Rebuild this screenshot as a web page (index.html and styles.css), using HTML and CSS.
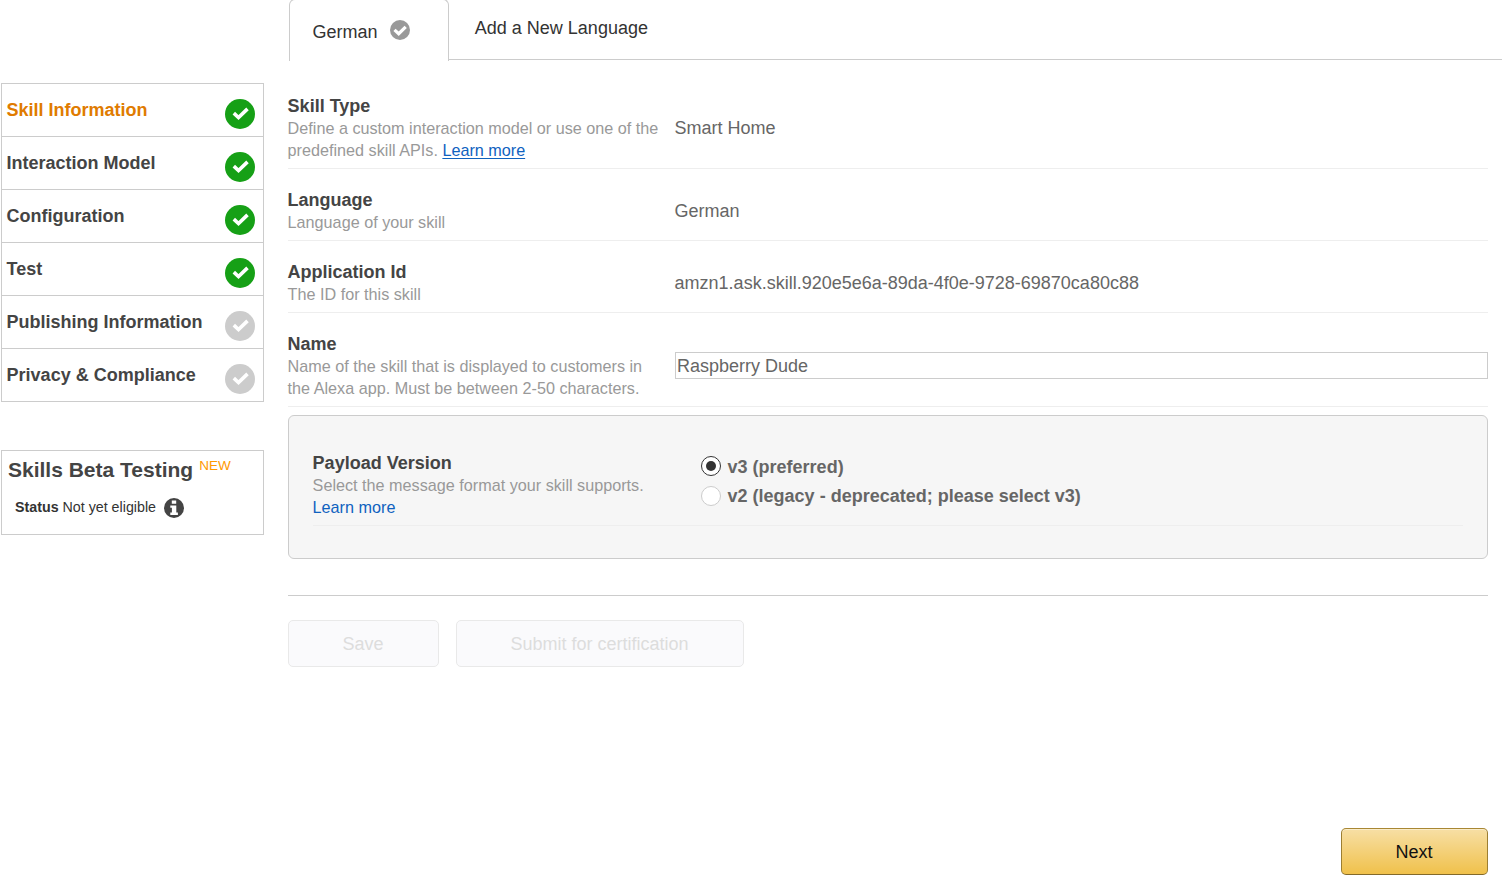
FILE: index.html
```html
<!DOCTYPE html>
<html lang="en">
<head>
<meta charset="utf-8">
<title>Skill Information</title>
<link rel="stylesheet" href="styles.css">
</head>
<body>
<svg class="defs" width="0" height="0" aria-hidden="true">
  <symbol id="check" viewBox="0 0 30 30">
    <circle cx="15" cy="15" r="15" fill="currentColor"/>
    <path d="M8.8 14.2l4.7 4.3 9-8.6" fill="none" stroke="#fff" stroke-width="3.6"/>
  </symbol>
</svg>
<header class="tabs">
  <div class="tab tab-active"><span>German</span>
    <svg class="tab-icon" viewBox="0 0 20 20"><circle cx="10" cy="10" r="10" fill="#999"/><path d="M4.5 9.8l4.2 3.9 7-6.9" fill="none" stroke="#fff" stroke-width="3.2"/></svg>
  </div>
  <div class="tab tab-new">Add a New Language</div>
</header>
<div class="layout">
  <aside class="sidebar">
    <nav class="steps">
      <a class="step current"><span>Skill Information</span><svg class="done"><use href="#check"/></svg></a>
      <a class="step"><span>Interaction Model</span><svg class="done"><use href="#check"/></svg></a>
      <a class="step"><span>Configuration</span><svg class="done"><use href="#check"/></svg></a>
      <a class="step"><span>Test</span><svg class="done"><use href="#check"/></svg></a>
      <a class="step"><span>Publishing Information</span><svg class="todo"><use href="#check"/></svg></a>
      <a class="step"><span>Privacy &amp; Compliance</span><svg class="todo"><use href="#check"/></svg></a>
    </nav>
    <section class="beta">
      <div class="beta-head"><h2>Skills Beta Testing</h2><span class="new">NEW</span></div>
      <div class="status"><span><b>Status</b> Not yet eligible</span>
        <svg class="info" viewBox="0 0 20 20"><circle cx="10" cy="10" r="10" fill="#444"/><path d="M7.8 2.4h4.4v3.4H7.8zM6.3 7.4h6v7.2h1.6V17H6.3v-2.4h1.6V9.8H6.3z" fill="#fff"/></svg>
      </div>
    </section>
  </aside>
  <main class="content">
    <div class="row">
      <div class="label"><h3>Skill Type</h3><p>Define a custom interaction model or use one of the predefined skill APIs. <a class="link underlined">Learn more</a></p></div>
      <div class="value">Smart Home</div>
    </div>
    <div class="row">
      <div class="label"><h3>Language</h3><p>Language of your skill</p></div>
      <div class="value">German</div>
    </div>
    <div class="row">
      <div class="label"><h3>Application Id</h3><p>The ID for this skill</p></div>
      <div class="value">amzn1.ask.skill.920e5e6a-89da-4f0e-9728-69870ca80c88</div>
    </div>
    <div class="row">
      <div class="label"><h3>Name</h3><p>Name of the skill that is displayed to customers in the Alexa app. Must be between 2-50 characters.</p></div>
      <input class="name-input" type="text" value="Raspberry Dude">
    </div>
    <section class="panel">
      <div class="row">
        <div class="label"><h3>Payload Version</h3><p>Select the message format your skill supports.<br><a class="link">Learn more</a></p></div>
        <div class="radios">
          <label class="radio"><span class="dot checked"></span>v3 (preferred)</label>
          <label class="radio"><span class="dot"></span>v2 (legacy - deprecated; please select v3)</label>
        </div>
      </div>
    </section>
    <div class="actions">
      <button class="btn save" disabled>Save</button>
      <button class="btn submit" disabled>Submit for certification</button>
    </div>
    <div class="footer"><button class="btn next">Next</button></div>
  </main>
</div>
</body>
</html>
```
FILE: styles.css
```css
* { box-sizing: border-box; }
body { margin: 0; height: 888px; overflow: hidden; background: #fff; color: #444; font: 18px/22px "Liberation Sans", Arial, sans-serif; }
h2, h3, p { margin: 0; }
.defs { display: none; }
.tabs { display: flex; height: 61px; padding-left: 289px; color: #333; }
.tab-active { display: flex; width: 160px; height: 62px; margin-top: -1px; padding: 21px 0 0 22.6px; border: 1px solid #ccc; border-bottom: 0; border-radius: 6px 6px 0 0; }
.tab-icon { width: 20px; height: 20px; margin: -1px 0 0 12.4px; }
.tab-new { flex: 1; height: 60px; padding: 17px 0 0 25.8px; border-bottom: 1px solid #ccc; }
.layout { display: flex; height: 827px; padding: 0 14px 0 1px; }
.sidebar { width: 263px; margin-right: 24px; padding-top: 22px; }
.steps { border: 1px solid #ccc; border-bottom: 0; }
.step { display: flex; justify-content: space-between; height: 53px; padding: 15px 8px 0 4.6px; border-bottom: 1px solid #ccc; font-weight: bold; }
.step svg { width: 30px; height: 30px; }
.step:first-child { color: #e07b00; }
.step .done { color: #16a016; }
.step .todo { color: #ccc; }
.beta { height: 85px; margin-top: 48px; border: 1px solid #ccc; padding: 7px 6px; }
.beta-head { display: flex; }
h2 { font-size: 21px; line-height: 24px; }
.new { margin-left: 6px; font-size: 13.5px; line-height: 16px; color: #f90; }
.status { display: flex; margin-top: 14px; padding-left: 7px; font-size: 14.25px; line-height: 22px; color: #333; }
.info { width: 20px; height: 20px; margin: 2px 0 0 7.6px; }
.content { display: flex; flex: 1; flex-direction: column; padding-top: 14px; }
.row { display: flex; align-items: center; padding: 20px 0 7px; border-bottom: 1px solid #eee; }
.label { width: 386.6px; padding-right: 10px; }
h3 { font-size: 18px; line-height: 22px; text-indent: -0.4px; }
p { margin-left: -0.4px; font-size: 16.19px; line-height: 22px; color: #999; }
.link { color: #0f62bf; }
.underlined { text-decoration: underline; text-underline-offset: 2px; text-decoration-thickness: 1px; }
.value { color: #666; }
.name-input { flex: 1; height: 27px; margin-bottom: 1px; padding: 1px 1.4px 0; border: 1px solid #ccc; border-radius: 0; background: #fff; color: #666; font: inherit; }
.panel { height: 144px; margin-top: 8px; padding: 16px 24px 0; border: 1px solid #ccc; border-radius: 6px; background: #f6f6f6; }
.panel .row { border-color: #eee; }
.radios { display: flex; flex-direction: column; gap: 7px; margin-bottom: 7px; font-weight: bold; color: #666; }
.radio { display: flex; align-items: center; }
.dot { display: grid; place-items: center; width: 20px; height: 20px; margin: 0 6.6px 0 1.4px; border: 1px solid #ccc; border-radius: 50%; background: #fff; }
.dot.checked { margin-bottom: 2px; border-color: #333; }
.dot.checked::after { content: ""; width: 10px; height: 10px; border-radius: 50%; background: #333; }
.actions { display: flex; gap: 17px; margin-top: 36px; padding-top: 24px; border-top: 1px solid #ccc; }
.btn { height: 47px; padding: 0 1px 0 0; border: 1px solid #e9e9e9; border-radius: 5px; background: #fafafc; color: #ddd; font: inherit; }
.save { width: 151px; }
.submit { width: 288px; }
.footer { display: flex; justify-content: flex-end; margin-top: auto; padding-bottom: 13px; }
.next { width: 147px; border-color: #a88734 #9c7e31 #846a29; background: linear-gradient(#f7dfa5, #f0c14b); box-shadow: inset 0 1px 0 rgba(255,255,255,.4); color: #111; }
```
